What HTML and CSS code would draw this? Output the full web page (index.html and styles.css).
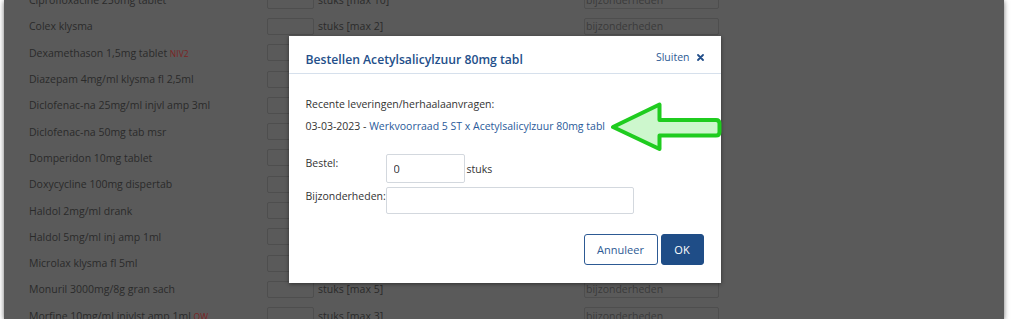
FILE: index.html
```html
<!DOCTYPE html>
<html lang="nl">
<head>
  <meta charset="UTF-8" />
  <title>Bestellen</title>
  <link rel="stylesheet" href="styles.css">
</head>
<body>

  <div class="screen">
    <div class="lijst">
      <div class="rij"><span class="naam">Ciprofloxacine 250mg tablet</span><input class="aantal"><span class="max">stuks [max 10]</span><input class="bijz" placeholder="bijzonderheden"></div>
      <div class="rij"><span class="naam">Colex klysma</span><input class="aantal"><span class="max">stuks [max 2]</span><input class="bijz" placeholder="bijzonderheden"></div>
      <div class="rij"><span class="naam">Dexamethason 1,5mg tablet <em>NIV2</em></span><input class="aantal"><span class="max">stuks [max 5]</span><input class="bijz" placeholder="bijzonderheden"></div>
      <div class="rij"><span class="naam">Diazepam 4mg/ml klysma fl 2,5ml</span><input class="aantal"><span class="max">stuks [max 2]</span><input class="bijz" placeholder="bijzonderheden"></div>
      <div class="rij"><span class="naam">Diclofenac-na 25mg/ml injvl amp 3ml</span><input class="aantal"><span class="max">stuks [max 5]</span><input class="bijz" placeholder="bijzonderheden"></div>
      <div class="rij"><span class="naam">Diclofenac-na 50mg tab msr</span><input class="aantal"><span class="max">stuks [max 10]</span><input class="bijz" placeholder="bijzonderheden"></div>
      <div class="rij"><span class="naam">Domperidon 10mg tablet</span><input class="aantal"><span class="max">stuks [max 10]</span><input class="bijz" placeholder="bijzonderheden"></div>
      <div class="rij"><span class="naam">Doxycycline 100mg dispertab</span><input class="aantal"><span class="max">stuks [max 10]</span><input class="bijz" placeholder="bijzonderheden"></div>
      <div class="rij"><span class="naam">Haldol 2mg/ml drank</span><input class="aantal"><span class="max">stuks [max 1]</span><input class="bijz" placeholder="bijzonderheden"></div>
      <div class="rij"><span class="naam">Haldol 5mg/ml inj amp 1ml</span><input class="aantal"><span class="max">stuks [max 5]</span><input class="bijz" placeholder="bijzonderheden"></div>
      <div class="rij"><span class="naam">Microlax klysma fl 5ml</span><input class="aantal"><span class="max">stuks [max 4]</span><input class="bijz" placeholder="bijzonderheden"></div>
      <div class="rij"><span class="naam">Monuril 3000mg/8g gran sach</span><input class="aantal"><span class="max">stuks [max 5]</span><input class="bijz" placeholder="bijzonderheden"></div>
      <div class="rij"><span class="naam">Morfine 10mg/ml injvlst amp 1ml <em>OW</em></span><input class="aantal"><span class="max">stuks [max 3]</span><input class="bijz" placeholder="bijzonderheden"></div>
    </div>

    <div class="backdrop">
      <div class="modal">
        <div class="modal-kop">
          <h3>Bestellen Acetylsalicylzuur 80mg tabl</h3>
          <a href="#" class="sluiten">Sluiten
            <svg width="7" height="7" viewBox="0 0 7 7"><path d="M1,1 L6,6 M6,1 L1,6" stroke="#234f8a" stroke-width="1.8" stroke-linecap="round" /></svg>
          </a>
        </div>
        <div class="modal-body">
          <p>Recente leveringen/herhaalaanvragen:</p>
          <p>03-03-2023 - <a href="#">Werkvoorraad 5 ST x Acetylsalicylzuur 80mg tabl</a></p>
          <div class="veld">
            <label>Bestel:</label>
            <input class="bestel" value="0">
            <span class="eenheid">stuks</span>
          </div>
          <div class="veld">
            <label>Bijzonderheden:</label>
            <input class="opmerking">
          </div>
        </div>
        <div class="modal-voet">
          <button class="annuleer">Annuleer</button>
          <button class="ok">OK</button>
        </div>
      </div>
    </div>

    <!-- markering -->
    <svg class="pijl" width="130" height="60" viewBox="600 96 130 60">
      <path d="M613,127 L659.5,104.5 L659.5,120 L716,120 Q719.5,120 719.5,123.5 L719.5,132 Q719.5,135.5 716,135.5 L659.5,135.5 L659.5,149 Z"
            fill="#cdf7cd" stroke="#1fcc1f" stroke-width="4" stroke-linejoin="round" />
    </svg>
  </div>

</body>
</html>
```

FILE: styles.css
```css
* { margin: 0; padding: 0; box-sizing: border-box; }
body { font-family: 'Open Sans', sans-serif; background: #fff; color: #333; }

.screen {
  position: relative;
  width: 1000px;
  height: 319px;
  margin-left: 4px;
  overflow: hidden;
  background: #5a5a5a;
  box-shadow: 0 1px 5px rgba(0, 0, 0, 0.55);
}

/* achtergrond lijst (gedimd) */
.lijst {
  margin-top: -13px;
  padding-left: 25px;
}

.rij {
  display: grid;
  grid-template-columns: 238px 51px 266px 135px;
  align-items: center;
  height: 26.3px;
  font-size: 10.5px;
  color: #2a2a2a;
}

.rij em {
  font-style: normal;
  font-size: 8.5px;
  color: #7a2424;
}

.rij input {
  height: 17px;
  border: 1px solid #4e4e4e;
  border-radius: 2px;
  background: transparent;
  font-family: 'Open Sans', sans-serif;
  font-size: 10.5px;
  padding: 0 1px;
}

.rij .aantal { width: 47px; }
.rij .bijz { width: 135px; }
.rij .bijz::placeholder { color: #3a3a3a; }

/* modal */
.backdrop {
  position: absolute;
  inset: 0;
  display: flex;
  align-items: center;
  justify-content: center;
}

.modal {
  width: 432px;
  margin-left: 1px;
  background: #fff;
  box-shadow: 0 1px 4px rgba(0, 0, 0, 0.45);
  font-size: 10.5px;
  color: #333;
}

.modal-kop {
  display: flex;
  justify-content: space-between;
  align-items: flex-start;
  padding: 15px 17px 4px;
  border-bottom: 1px solid #d6e0ec;
}

.modal-kop h3 {
  font-size: 12.2px;
  font-weight: 600;
  line-height: 18px;
  color: #234f8a;
}

.sluiten {
  display: flex;
  align-items: center;
  gap: 7px;
  margin-top: -3px;
  line-height: 18px;
  color: #2d5a94;
  text-decoration: none;
}

.modal-body {
  padding: 22px 17px 0;
}

.modal-body p {
  line-height: 17px;
  margin-bottom: 5px;
}

.modal-body p a {
  color: #2a5a9a;
  text-decoration: none;
}

.veld {
  display: flex;
  align-items: flex-start;
  margin-bottom: 4px;
}

.modal-body p + .veld { margin-top: 19px; }

.veld label {
  flex-shrink: 0;
  width: 80px;
  line-height: 17px;
  padding-top: 1px;
}

.veld input {
  border: 1px solid #d3d8de;
  border-radius: 2px;
  font-family: 'Open Sans', sans-serif;
  font-size: 11px;
  color: #333;
}

.bestel {
  width: 79px;
  height: 29px;
  padding-left: 7px;
}

.eenheid {
  align-self: center;
  margin-left: 2px;
}

.opmerking {
  width: 248px;
  height: 27px;
}

.modal-voet {
  display: flex;
  justify-content: flex-end;
  gap: 3px;
  padding: 16px 17px 18px;
}

.modal-voet button {
  height: 31px;
  border-radius: 3px;
  font-family: 'Open Sans', sans-serif;
  font-size: 11px;
  cursor: pointer;
}

.annuleer {
  width: 74px;
  background: #fff;
  border: 1px solid #2d5a94;
  color: #2d5a94;
}

.ok {
  width: 43px;
  background: #1f4d87;
  border: 1px solid #1f4d87;
  color: #fff;
}

.pijl {
  position: absolute;
  left: 596px;
  top: 96px;
}
```
